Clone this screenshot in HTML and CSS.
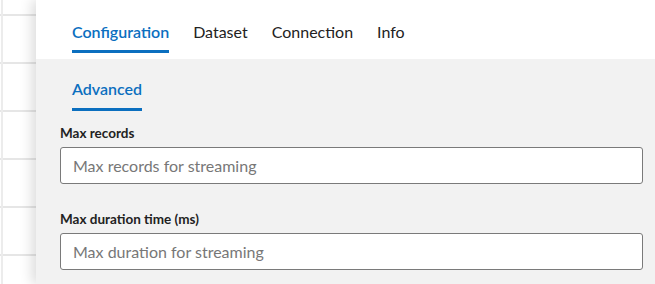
FILE: index.html
```html
<!DOCTYPE html>
<html lang="en">
<head>
    <meta charset="UTF-8">
    <title>Configuration</title>

    <link rel="stylesheet" href="styles.css">
</head>
<body>
<div class="layout">
    <div class="canvas"></div>
    <section class="panel">
        <nav class="tabs">
            <a class="tab active">Configuration</a>
            <a class="tab">Dataset</a>
            <a class="tab">Connection</a>
            <a class="tab">Info</a>
        </nav>
        <div class="content">
            <nav class="subtabs">
                <a class="subtab active">Advanced</a>
            </nav>
            <div class="field">
                <label class="label" for="max-records">Max records</label>
                <input class="input" id="max-records" type="text" placeholder="Max records for streaming">
            </div>
            <div class="field">
                <label class="label" for="max-duration">Max duration time (ms)</label>
                <input class="input" id="max-duration" type="text" placeholder="Max duration for streaming">
            </div>
        </div>
    </section>
</div>
</body>
</html>
```

FILE: styles.css
```css
html, body {
    margin: 0;
    padding: 0;
    height: 100%;
    overflow: hidden;

    font-family: Lato, 'Noto Sans', sans-serif;
    color: #222;
}

.layout {
    display: flex;
    height: 100%;
}

.canvas {
    width: 36px;
    flex: none;
    background-color: #fff;
    background-image:
        linear-gradient(to right, transparent 1px, #ececec 1px, #ececec 3px, transparent 3px),
        repeating-linear-gradient(to bottom, transparent 0, transparent 14px, #e6e6e6 14px, #e6e6e6 16px, transparent 16px, transparent 48px);
}

.panel {
    flex: 1;
    background: #f2f2f2;
    box-shadow: -4px 0 12px rgba(0, 0, 0, 0.14);
    position: relative;
}

.tabs {
    display: flex;
    gap: 24px;
    height: 59px;
    padding-left: 36px;
    background: #fff;
    box-sizing: border-box;
}

.tab {
    display: flex;
    align-items: flex-end;
    height: 53px;
    padding-bottom: 9px;
    box-sizing: border-box;
    font-size: 16px;
    border-bottom: 3px solid transparent;
    cursor: pointer;
}

.tab.active {
    color: #0b6fbf;
    font-weight: 600;
    border-bottom-color: #0b6fbf;
}

.content {
    padding: 0 12px 0 24px;
}

.subtabs {
    display: flex;
    padding-left: 12px;
    height: 52px;
}

.subtab {
    display: flex;
    align-items: flex-end;
    height: 52px;
    padding-bottom: 10px;
    box-sizing: border-box;
    font-size: 16px;
    border-bottom: 3px solid transparent;
}

.subtab.active {
    color: #0b6fbf;
    font-weight: 600;
    border-bottom-color: #0b6fbf;
}

.field {
    display: flex;
    flex-direction: column;
    padding-top: 13px;
    margin-bottom: 13px;
}

.label {
    font-size: 13.5px;
    font-weight: 700;
    line-height: 18px;
    margin-bottom: 5px;
}

.input {
    height: 37px;
    box-sizing: border-box;
    border: 1px solid #7a7a7a;
    border-radius: 3px;
    padding: 0 12px;
    font-family: inherit;
    font-size: 16px;
    background: #fff;
}

.input::placeholder {
    color: #777;
}
```
